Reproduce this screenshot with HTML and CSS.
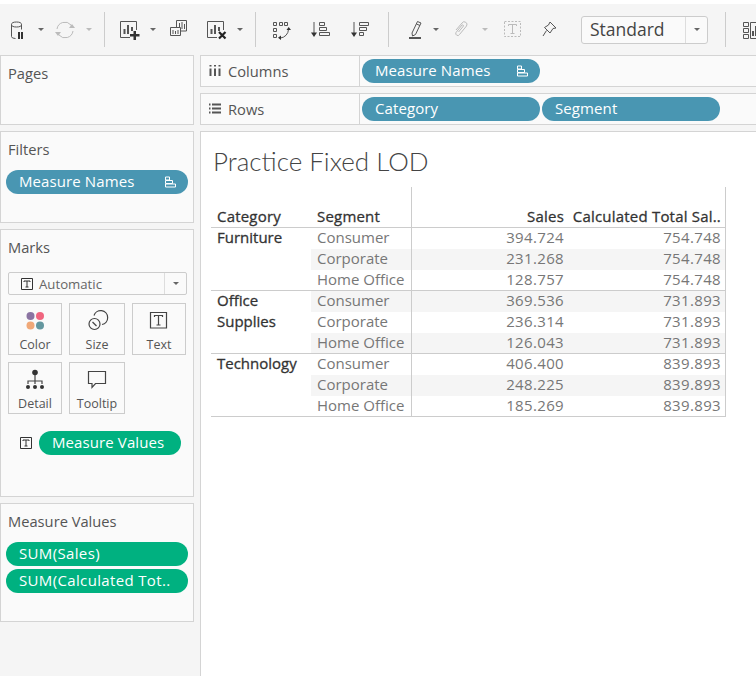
FILE: index.html
```html
<!DOCTYPE html>
<html lang="en">
<head>
<meta charset="utf-8">
<title>Practice Fixed LOD</title>
<link rel="stylesheet" href="styles.css">
</head>
<body>
<div class="topstrip"></div>
<header class="toolbar">
  <span class="tool"><svg viewBox="0 0 24 24"><ellipse cx="11.500" cy="6.500" rx="5" ry="2.500"/><path d="M6.500 6.500v12q0 2 4 2M16.500 6.500v5"/><path class="solid" d="M13 14h2v7h-2zM16 14h2v7h-2z"/></svg></span>
  <span class="caret"></span>
  <span class="tool off ml6"><svg viewBox="0 0 24 24"><path d="M4 11a8 8 0 0 1 14-4l2 3M20 13a8 8 0 0 1-14 4l-2-3"/><path class="solid" d="M16 10h6l-3-4zM2 14h6l-3 4z"/></svg></span>
  <span class="caret off"></span>
  <span class="sep ml9"></span>
  <span class="tool ml12"><svg viewBox="0 0 24 24"><path d="M19.500 12V3.500H3.500V19.500H13"/><path class="thick" d="M7.500 16V11M11 16V7M15 13V9"/><path class="solid" d="M16.500 13h2.500v3h3.500v2.500h-3.500v3.500h-2.500v-3.500h-3.500v-2.500h3.500z"/></svg></span>
  <span class="caret"></span>
  <span class="tool ml7"><svg viewBox="0 0 24 24"><path d="M10.500 9V2.500H20.500V13H15"/><path d="M4.500 9.500H14.500V17.500H4.500z"/><path d="M13.500 5v4M16 4v7M18.500 6v5M7 12v4M9.500 13v3M12 12v4"/></svg></span>
  <span class="tool ml14"><svg viewBox="0 0 24 24"><path d="M19.500 12V3.500H3.500V19.500H13"/><path class="thick" d="M7.500 16V11M11 16V7M15 13V9"/><path class="cross" d="M15 14l6.500 6.500M21.500 14L15 20.500"/></svg></span>
  <span class="caret"></span>
  <span class="sep ml9"></span>
  <span class="tool ml13"><svg viewBox="0 0 24 24"><path d="M4.500 4.500h3v3h-3zM10.500 4.500h3v3h-3zM15.500 4.500h3v3h-3zM4.500 10.500h3v3h-3zM4.500 16.500h3v3h-3zM19.500 11.500a9 9 0 0 1-8 8.500"/><path class="solid" d="M17.500 12h4.500l-2.300-3zM12 17.500v4.500l-3-2.300z"/></svg></span>
  <span class="tool ml15"><svg viewBox="0 0 24 24"><path d="M6 4v13"/><path class="solid" d="M3 14.500h6L6 19z"/><path d="M11.500 4.500h5v3h-5zM11.500 9.500h7v3h-7zM11.500 14.500h10v3h-10z"/></svg></span>
  <span class="tool ml16"><svg viewBox="0 0 24 24"><path d="M6 4v13"/><path class="solid" d="M3 14.500h6L6 19z"/><path d="M11.500 4.500h9v3h-9zM11.500 9.500h7v3h-7zM11.500 14.500h4v3h-4z"/></svg></span>
  <span class="sep ml16"></span>
  <span class="tool ml14"><svg viewBox="0 0 24 24"><path d="M9 15L14.500 3.500 18 5 12.500 16.500 9.500 18zM13.500 6l3.500 1.500"/><path class="bar" d="M6 19h12v2H6z"/></svg></span>
  <span class="caret ml3"></span>
  <span class="tool off ml7"><svg viewBox="0 0 24 24"><path d="M7 12l6-7a2.500 2.500 0 0 1 4.500 3l-7 8.500a1.800 1.800 0 0 1-3.500-2l6-7.500a1 1 0 0 1 1.500 1l-5 6"/></svg></span>
  <span class="caret off"></span>
  <span class="tool off ml9"><svg viewBox="0 0 24 24"><path class="dash" d="M4.500 3.500h16v15h-16z"/><path d="M8.500 8V6.500h8V8M12.500 6.500v9M10.500 15.500h4"/></svg></span>
  <span class="tool ml13"><svg viewBox="0 0 24 24"><path d="M13 4l6 6-3 .5-3 4.500-5.500-5.500 4-2.500zM9.500 12.500L6 18"/></svg></span>
  <div class="select">
    <span class="select-text">Standard</span>
    <span class="select-btn"><span class="caret flush"></span></span>
  </div>
  <span class="sep ml17"></span>
  <span class="tool ml7"><svg viewBox="0 0 24 24"><path d="M10.500 4.500h5v4h-5zM10.500 10.500h5v4h-5zM10.500 16.500h5v4h-5zM17.500 4.500h8v16h-8z"/><path class="thick" d="M20 18v-5M23 18V8"/></svg></span>
</header>

<main class="workspace">
  <aside class="sidebar">
    <section class="card card-pages"><h2 class="card-title">Pages</h2></section>
    <section class="card card-filters">
      <h2 class="card-title">Filters</h2>
      <div class="pill pill-blue pill-wide"><span>Measure Names</span><svg class="sorticon" viewBox="0 0 12 12"><path d="M1.500 1h4v3h-4zM1.500 4.500h7v3h-7zM1.500 8h10v3h-10z"/></svg></div>
    </section>
    <section class="card card-marks">
      <h2 class="card-title">Marks</h2>
      <div class="marktype">
        <span class="marktype-label"><svg class="ticon" viewBox="0 0 12 12"><path d="M.5.500h11v11H.5z"/><path d="M3 4V3h6v1M6 3v6M4.500 9h3"/></svg>Automatic</span>
        <span class="marktype-btn"><span class="caret flush"></span></span>
      </div>
      <div class="markgrid">
        <div class="markbtn mb-a"><svg class="mico" viewBox="0 0 24 24"><circle class="c1" cx="7.500" cy="7" r="4"/><circle class="c2" cx="17" cy="7" r="4"/><circle class="c3" cx="7.500" cy="16.500" r="4"/><circle class="c4" cx="17" cy="16.500" r="4"/></svg>Color</div>
        <div class="markbtn mb-b"><svg class="mico" viewBox="0 0 24 24"><path d="M9 6.500a7 7 0 1 1 8 9"/><circle cx="9.500" cy="15" r="5.500"/><path d="M7.500 13l4 4"/></svg>Size</div>
        <div class="markbtn mb-c"><svg class="mico" viewBox="0 0 24 24"><path d="M3.500 3.500h16v15.500h-16z"/><path d="M7.500 8V6.500h8V8M11.500 6.500v9.500M9.500 16h4"/></svg>Text</div>
        <div class="markbtn mb-a"><svg class="mico" viewBox="0 0 24 24"><circle class="fill" cx="12" cy="4.500" r="2.800"/><circle class="fill" cx="5" cy="19" r="2"/><circle class="fill" cx="12" cy="19" r="2"/><circle class="fill" cx="19" cy="19" r="2"/><path d="M12 7v9M5 16v-3h14v3"/></svg>Detail</div>
        <div class="markbtn mb-b"><svg class="mico" viewBox="0 0 24 24"><path d="M3.500 3.500h17v12h-10l-3.500 4v-4h-3.500z"/></svg>Tooltip</div>
      </div>
      <div class="markrow">
        <svg class="ticon" viewBox="0 0 12 12"><path d="M.5.500h11v11H.5z"/><path d="M3 4V3h6v1M6 3v6M4.500 9h3"/></svg>
        <div class="pill pill-green pill-mv"><span>Measure Values</span></div>
      </div>
    </section>
    <section class="card card-values">
      <h2 class="card-title">Measure Values</h2>
      <div class="pill pill-green pill-wide pill-sum"><span>SUM(Sales)</span></div>
      <div class="pill pill-green pill-wide pill-sum pill-next"><span>SUM(Calculated Tot..</span></div>
    </section>
  </aside>

  <div class="content">
    <div class="shelf">
      <div class="shelf-label"><svg class="shelf-ico" viewBox="0 0 12 12"><path d="M1.500 0v1.500M1.500 3.500V11M6 0v1.500M6 3.500V11M10.500 0v1.500M10.500 3.500V11"/></svg>Columns</div>
      <div class="shelf-pills"><div class="pill pill-blue pill-shelf"><span>Measure Names</span><svg class="sorticon" viewBox="0 0 12 12"><path d="M1.500 1h4v3h-4zM1.500 4.500h7v3h-7zM1.500 8h10v3h-10z"/></svg></div></div>
    </div>
    <div class="shelf">
      <div class="shelf-label"><svg class="shelf-ico" viewBox="0 0 12 12"><path d="M0 1.500h1.500M3 1.500h9M0 5.500h1.500M3 5.500h9M0 9.500h1.500M3 9.500h9"/></svg>Rows</div>
      <div class="shelf-pills">
        <div class="pill pill-blue pill-shelf"><span>Category</span></div>
        <div class="pill pill-blue pill-shelf"><span>Segment</span></div>
      </div>
    </div>
    <section class="viz">
      <h1 class="viz-title">Practice Fixed LOD</h1>
      <div class="crosstab">
        <div class="xt-head">
          <div class="xt-cell xt-hcell">Category</div>
          <div class="xt-cell xt-hcell xt-div">Segment</div>
          <div class="xt-cell xt-hcell xt-num">Sales</div>
          <div class="xt-cell xt-hcell xt-num">Calculated Total Sal..</div>
        </div>
        <div class="xt-group">
          <div class="xt-cat">Furniture</div>
          <div class="xt-row"><div class="xt-cell xt-div">Consumer</div><div class="xt-cell xt-num">394.724</div><div class="xt-cell xt-num">754.748</div></div>
          <div class="xt-row band"><div class="xt-cell xt-div">Corporate</div><div class="xt-cell xt-num">231.268</div><div class="xt-cell xt-num">754.748</div></div>
          <div class="xt-row"><div class="xt-cell xt-div">Home Office</div><div class="xt-cell xt-num">128.757</div><div class="xt-cell xt-num">754.748</div></div>
        </div>
        <div class="xt-group">
          <div class="xt-cat">Office<br>Supplies</div>
          <div class="xt-row band"><div class="xt-cell xt-div">Consumer</div><div class="xt-cell xt-num">369.536</div><div class="xt-cell xt-num">731.893</div></div>
          <div class="xt-row"><div class="xt-cell xt-div">Corporate</div><div class="xt-cell xt-num">236.314</div><div class="xt-cell xt-num">731.893</div></div>
          <div class="xt-row band"><div class="xt-cell xt-div">Home Office</div><div class="xt-cell xt-num">126.043</div><div class="xt-cell xt-num">731.893</div></div>
        </div>
        <div class="xt-group">
          <div class="xt-cat">Technology</div>
          <div class="xt-row"><div class="xt-cell xt-div">Consumer</div><div class="xt-cell xt-num">406.400</div><div class="xt-cell xt-num">839.893</div></div>
          <div class="xt-row band"><div class="xt-cell xt-div">Corporate</div><div class="xt-cell xt-num">248.225</div><div class="xt-cell xt-num">839.893</div></div>
          <div class="xt-row"><div class="xt-cell xt-div">Home Office</div><div class="xt-cell xt-num">185.269</div><div class="xt-cell xt-num">839.893</div></div>
        </div>
      </div>
    </section>
  </div>
</main>
</body>
</html>
```

FILE: styles.css
```css
* { box-sizing: border-box; }
html, body { margin: 0; height: 100%; }
body {
  width: 756px;
  height: 676px;
  overflow: hidden;
  background: #f5f5f5;
  font-family: "Open Sans", "Noto Sans", sans-serif;
  color: #555;
}
.topstrip { height: 4px; background: #fff; }

/* toolbar */
.toolbar { height: 51px; display: flex; align-items: center; padding-left: 5px; overflow: hidden; }
.tool { width: 24px; height: 24px; flex: none; display: block; }
.tool svg { width: 24px; height: 24px; display: block; fill: none; stroke: #555; stroke-width: 1; overflow: visible; }
.tool .solid { fill: #333; stroke: none; }
.tool .thick { stroke-width: 2; }
.tool .cross { stroke: #222; stroke-width: 2.200; }
.tool .bar { fill: #555; stroke: none; }
.tool .dash { stroke-dasharray: 2 1.500; }
.tool.off svg { stroke: #bbb; }
.tool.off .solid { fill: #bbb; }
.caret {
  width: 12px; height: 3px; flex: none; margin-left: 6px; position: relative; display: block;
}
.caret::after {
  content: ""; position: absolute; left: 3px; top: 0;
  border-left: 3px solid transparent; border-right: 3px solid transparent; border-top: 3px solid #666;
}
.caret.off::after { border-top-color: #bbb; }
.caret.flush { margin-left: 0; }
.sep { width: 1px; height: 35px; background: #ccc; flex: none; }
.ml3 { margin-left: 3px; }
.ml6 { margin-left: 6px; }
.ml7 { margin-left: 7px; }
.ml9 { margin-left: 9px; }
.ml12 { margin-left: 12px; }
.ml13 { margin-left: 13px; }
.ml14 { margin-left: 14px; }
.ml15 { margin-left: 15px; }
.ml16 { margin-left: 16px; }
.ml17 { margin-left: 17px; }
.select {
  width: 127px; height: 28px; flex: none; margin-left: 20px; display: flex;
  border: 1px solid #ccc; border-radius: 3px; background: #fafafa;
}
.select-text { flex: 1; padding-left: 8px; font-size: 17.500px; line-height: 25px; color: #444; }
.select-btn { width: 22px; border-left: 1px solid #ddd; display: flex; align-items: center; justify-content: center; }
.select-btn .caret { width: 12px; }

/* workspace */
.workspace { display: flex; height: 621px; }
.sidebar { width: 200px; flex: none; }
.card {
  width: 194px; background: #fafafa; border: 1px solid #d4d4d4;
  margin-bottom: 6px; position: relative;
}
.card-pages { height: 70px; }
.card-filters { height: 92px; }
.card-marks { height: 268px; }
.card-values { height: 119px; }
.card-title { margin: 0; padding: 7px 0 0 7px; height: 27px; font-size: 14.700px; line-height: 20px; font-weight: 400; color: #555; box-sizing: content-box; height: 20px; }

.pill {
  display: flex; align-items: center; height: 24px; border-radius: 12px; color: #fff;
  font-size: 15px; padding-left: 13px; white-space: nowrap; flex: none; letter-spacing: .1px;
}
.pill span { position: relative; top: -1px; }
.pill-blue { background: #4996b2; }
.pill-green { background: #00b180; }
.pill-wide { width: 182px; margin-left: 5px; }
.card-filters .pill-wide { margin-top: 11px; }
.card-values .pill-wide { margin-top: 11px; }
.card-values .pill-next { margin-top: 3px; }
.pill-sum { letter-spacing: .35px; }
.pill-shelf { width: 178px; }
.pill-mv { width: 142px; }
.sorticon { width: 12px; height: 12px; margin-left: auto; margin-right: 12px; fill: none; stroke: #fff; stroke-width: 1; flex: none; }

.marktype {
  width: 179px; height: 23px; margin: 15px 0 0 7px; display: flex;
  border: 1px solid #ccc; border-radius: 2px; background: #fafafa;
}
.marktype-label { flex: 1; display: flex; align-items: center; gap: 6px; padding-left: 12px; font-size: 13.200px; color: #666; }
.marktype-btn { width: 22px; border-left: 1px solid #ddd; display: flex; align-items: center; justify-content: center; }
.marktype-btn .caret { width: 12px; }
.ticon { width: 12px; height: 12px; fill: none; stroke: #333; stroke-width: 1; flex: none; }
.markgrid {
  display: grid; grid-template-columns: 54px 56px 54px; column-gap: 7px; row-gap: 7px;
  margin: 8px 0 0 7px;
}
.markbtn {
  height: 52px; border: 1px solid #ccc; display: flex; flex-direction: column; align-items: center;
  font-size: 12.500px; line-height: 16px; color: #555; padding-top: 5px;
}
.mico { width: 24px; height: 24px; margin-bottom: 4px; fill: none; stroke: #444; stroke-width: 1.200; flex: none; }
.mico .c1 { fill: #8b74a2; stroke: none; }
.mico .c2 { fill: #f0657f; stroke: none; }
.mico .c3 { fill: #f0a878; stroke: none; }
.mico .c4 { fill: #64979f; stroke: none; }
.mico .fill { fill: #333; stroke: none; }
.markrow { display: flex; align-items: center; gap: 7px; margin: 17px 0 0 19px; }

/* content */
.content { flex: 1; min-width: 0; display: flex; flex-direction: column; }
.shelf {
  height: 32px; border: 1px solid #d4d4d4; border-right: 0; background: #fafafa;
  display: flex; margin-bottom: 6px;
}
.shelf-label {
  width: 159px; flex: none; border-right: 1px solid #d4d4d4; display: flex; align-items: center;
  padding-left: 8px; gap: 7px; font-size: 14.700px; color: #555;
}
.shelf-ico { width: 12px; height: 12px; fill: none; stroke: #555; stroke-width: 2; flex: none; }
.shelf-pills { display: flex; gap: 2px; padding: 3px 0 0 2px; }
.viz {
  flex: 1; background: #fff; border-left: 1px solid #d4d4d4; border-top: 1px solid #d4d4d4;
  padding: 0 0 0 10px; min-height: 0; overflow: hidden;
}
.viz-title {
  margin: 0; padding: 12px 0 0 2px; height: 55px;
  font-family: Lato, "Open Sans", sans-serif; font-size: 26px; line-height: 34px; font-weight: 300;
  color: #444; white-space: nowrap;
}

.crosstab { width: 515px; font-size: 15px; position: relative; border-right: 1px solid #ccc; }
.xt-cell { line-height: 19px; }
.xt-head { display: grid; grid-template-columns: 100px 101px 153px 160px; height: 41px; align-items: end; border-bottom: 1px solid #ccc; }
.xt-hcell { color: #333; padding-left: 6px; letter-spacing: .2px; -webkit-text-stroke: .3px #333; }
.crosstab .xt-head .xt-cell { line-height: 21px; }
.xt-head .xt-div { height: 40px; padding-top: 19px; }
.xt-head .xt-num { padding-left: 0; }
.xt-group { display: grid; grid-template-columns: 100px 1fr; grid-template-rows: 21px 21px 20px; height: 63px; border-bottom: 1px solid #ccc; }
.xt-cat { grid-row: 1 / span 3; padding-left: 6px; color: #333; line-height: 21px; margin-top: -1px; -webkit-text-stroke: .3px #333; }
.xt-row { grid-column: 2; display: grid; grid-template-columns: 101px 153px 160px; color: #777; }
.xt-row.band { background: #f5f5f5; }
.xt-row .xt-cell:first-child { padding-left: 6px; }
.xt-div { border-right: 1px solid #ccc; white-space: nowrap; }
.xt-num { text-align: right; padding-right: 1px; white-space: nowrap; letter-spacing: .35px; }
.xt-num:last-child { padding-right: 4px; }
.xt-head .xt-num { letter-spacing: .2px; }
```
